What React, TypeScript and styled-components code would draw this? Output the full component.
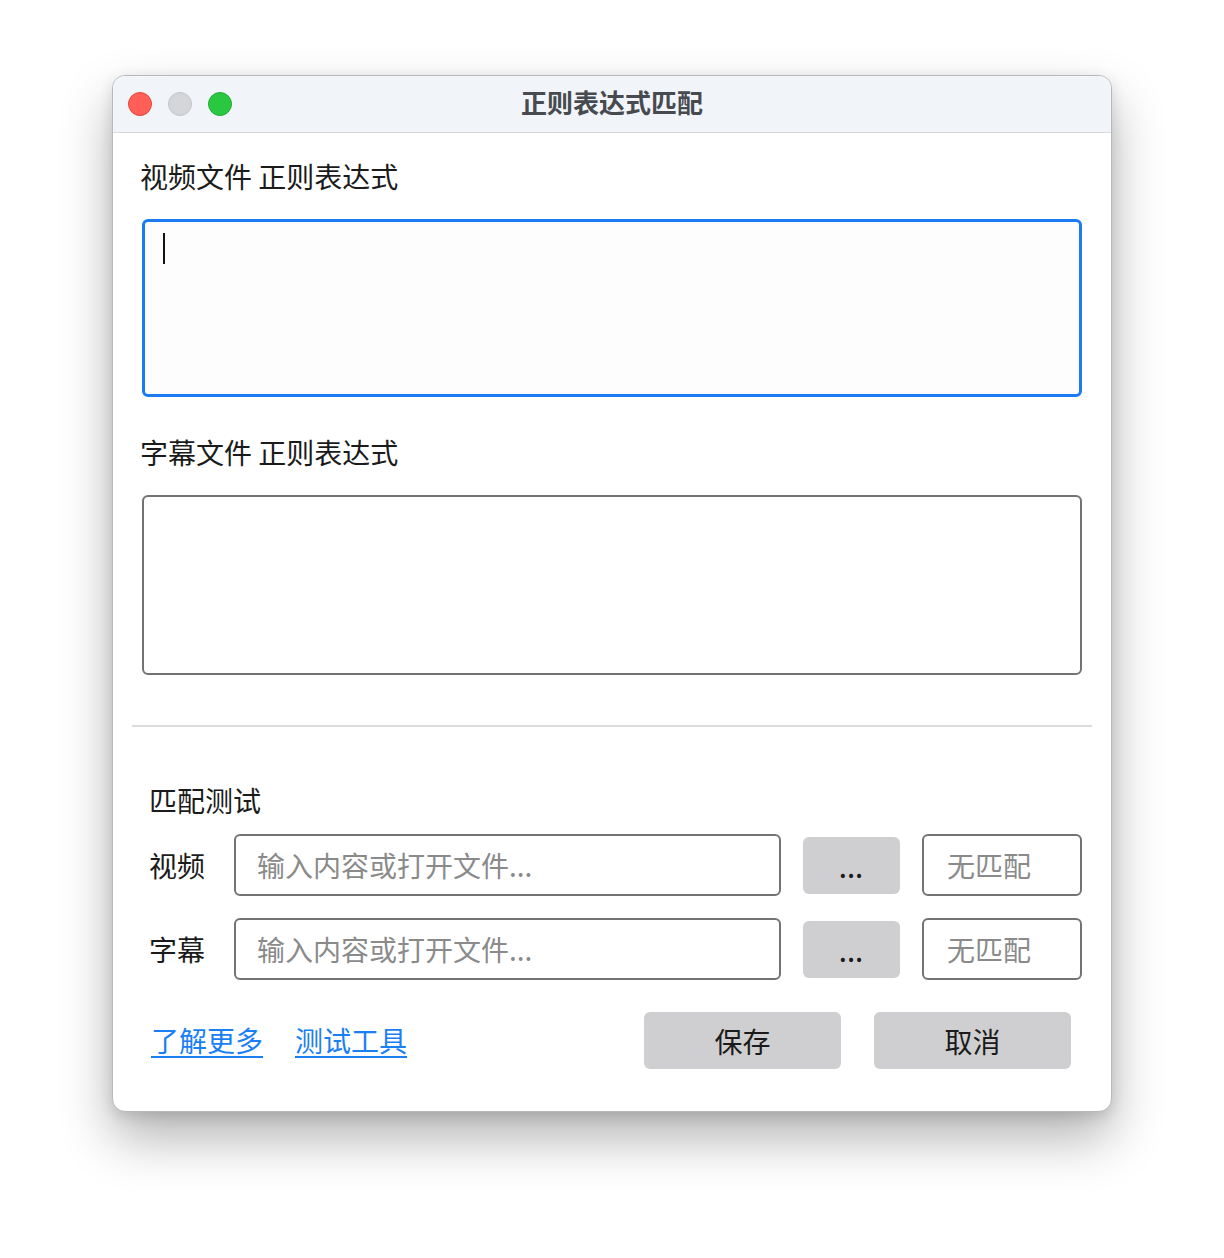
import React from "react";
import styled, { createGlobalStyle } from "styled-components";

const Global = createGlobalStyle`
  html, body { margin: 0; padding: 0; background: #ffffff; }
  body { font-family: "Noto Sans CJK SC", "Noto Sans", sans-serif; }
  * { box-sizing: border-box; }
`;

const Page = styled.div`
  padding: 75px 112px 148px 112px;
  width: 1224px;
`;

const Window = styled.div`
  width: 1000px;
  background: #ffffff;
  border-radius: 13px;
  border: 1px solid #b9b9bb;
  box-shadow: 0 26px 52px rgba(0, 0, 0, 0.3), 0 4px 14px rgba(0, 0, 0, 0.12);
  overflow: hidden;
`;

const TitleBar = styled.div`
  height: 57px;
  background: #f1f5fa;
  border-bottom: 1px solid #d6d8db;
  display: flex;
  align-items: center;
  position: relative;
  padding-left: 15px;
  padding-bottom: 1px;
  gap: 16px;
`;

const Light = styled.span<{ $c: string; $b: string }>`
  width: 24px;
  height: 24px;
  border-radius: 50%;
  background: ${(p) => p.$c};
  border: 1px solid ${(p) => p.$b};
`;

const Title = styled.div`
  position: absolute;
  left: 0;
  right: 0;
  top: 0;
  bottom: 0;
  display: flex;
  align-items: center;
  justify-content: center;
  padding-bottom: 6px;
  font-size: 26px;
  font-weight: 700;
  color: #474a4f;
  pointer-events: none;
`;

const Body = styled.div`
  padding: 25px 29px 0 27px;
  display: flex;
  flex-direction: column;
`;

const FieldLabel = styled.div<{ $top: number }>`
  font-size: 28px;
  line-height: 36px;
  color: #1b1b1b;
  margin-top: ${(p) => p.$top}px;
  margin-bottom: 25px;
`;

const AreaWrap = styled.div`
  position: relative;
  margin-left: 2px;
`;

const Area = styled.textarea<{ $focus?: boolean }>`
  display: block;
  width: 100%;
  height: ${(p) => (p.$focus ? 178 : 180)}px;
  resize: none;
  outline: none;
  border-radius: 6px;
  border: ${(p) => (p.$focus ? "3px solid #1a7bf4" : "2px solid #737373")};
  background: ${(p) => (p.$focus ? "#fdfdfd" : "#ffffff")};
  font-family: inherit;
  font-size: 28px;
`;

const Caret = styled.span`
  position: absolute;
  left: 21px;
  top: 14px;
  width: 2px;
  height: 31px;
  background: #111;
`;

const Divider = styled.div`
  height: 2px;
  background: #dcdcdc;
  margin: 50px 19px 0 19px;
`;

const Test = styled.div`
  padding: 55px 29px 0 36px;
  display: flex;
  flex-direction: column;
`;

const SectionTitle = styled.div`
  font-size: 28px;
  line-height: 36px;
  color: #1b1b1b;
  margin-bottom: 16px;
`;

const Row = styled.div`
  display: flex;
  align-items: center;
  height: 62px;
  margin-bottom: 22px;
`;

const RowLabel = styled.div`
  width: 85px;
  font-size: 28px;
  color: #1b1b1b;
`;

const TextInput = styled.input`
  width: 547px;
  height: 62px;
  border: 2px solid #737373;
  border-radius: 6px;
  padding: 0 0 0 21px;
  font-family: inherit;
  font-size: 28px;
  color: #1b1b1b;
  outline: none;
  &::placeholder { color: #8a8a8a; }
`;

const DotButton = styled.button`
  margin-left: 22px;
  width: 97px;
  height: 57px;
  border: none;
  border-radius: 6px;
  background: #cfcfd1;
  font-family: inherit;
  font-size: 22px;
  font-weight: 700;
  color: #1b1b1b;
  padding: 6px 0 0 0;
  display: flex;
  align-items: center;
  justify-content: center;
  letter-spacing: 1px;
`;

const MatchBox = styled.div`
  margin-left: 22px;
  flex: 1;
  height: 62px;
  border: 2px solid #737373;
  border-radius: 6px;
  display: flex;
  align-items: center;
  padding-left: 23px;
  font-size: 28px;
  color: #8a8a8a;
`;

const Footer = styled.div`
  display: flex;
  align-items: center;
  padding: 10px 40px 42px 38px;
`;

const Link = styled.a`
  font-size: 28px;
  line-height: 36px;
  color: #1a7ff2;
  text-decoration: underline;
  text-underline-offset: 4px;
  text-decoration-thickness: 2px;
  margin-right: 32px;
  margin-top: -2px;
  cursor: pointer;
`;

const Spacer = styled.div`
  flex: 1;
`;

const ActionButton = styled.button`
  width: 197px;
  height: 57px;
  border: none;
  border-radius: 6px;
  background: #cfcfd1;
  font-family: inherit;
  font-size: 28px;
  color: #1b1b1b;
  & + & { margin-left: 33px; }
`;

export default function App() {
  return (
    <>
      <Global />
      <Page>
        <Window>
          <TitleBar>
            <Light $c="#ff5f57" $b="#e2463f" />
            <Light $c="#d5d6da" $b="#c3c4c8" />
            <Light $c="#2ac840" $b="#1fae33" />
            <Title>正则表达式匹配</Title>
          </TitleBar>
          <Body>
            <FieldLabel $top={0}>视频文件 正则表达式</FieldLabel>
            <AreaWrap>
              <Area $focus />
              <Caret />
            </AreaWrap>
            <FieldLabel $top={37}>字幕文件 正则表达式</FieldLabel>
            <AreaWrap>
              <Area />
            </AreaWrap>
          </Body>
          <Divider />
          <Test>
            <SectionTitle>匹配测试</SectionTitle>
            <Row>
              <RowLabel>视频</RowLabel>
              <TextInput placeholder="输入内容或打开文件..." />
              <DotButton>...</DotButton>
              <MatchBox>无匹配</MatchBox>
            </Row>
            <Row>
              <RowLabel>字幕</RowLabel>
              <TextInput placeholder="输入内容或打开文件..." />
              <DotButton>...</DotButton>
              <MatchBox>无匹配</MatchBox>
            </Row>
          </Test>
          <Footer>
            <Link>了解更多</Link>
            <Link>测试工具</Link>
            <Spacer />
            <ActionButton>保存</ActionButton>
            <ActionButton>取消</ActionButton>
          </Footer>
        </Window>
      </Page>
    </>
  );
}
